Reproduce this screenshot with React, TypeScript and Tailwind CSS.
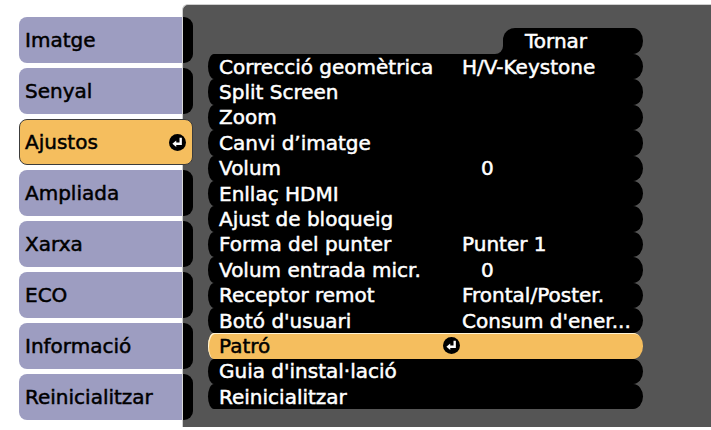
import React from 'react';

const tabs = ['Imatge', 'Senyal', 'Ajustos', 'Ampliada', 'Xarxa', 'ECO', 'Informació', 'Reinicialitzar'];

const rows: { label: string; value?: string; indent?: boolean }[] = [
    { label: 'Correcció geomètrica', value: 'H/V-Keystone' },
    { label: 'Split Screen' },
    { label: 'Zoom' },
    { label: 'Canvi d’imatge' },
    { label: 'Volum', value: '0', indent: true },
    { label: 'Enllaç HDMI' },
    { label: 'Ajust de bloqueig' },
    { label: 'Forma del punter', value: 'Punter 1' },
    { label: 'Volum entrada micr.', value: '0', indent: true },
    { label: 'Receptor remot', value: 'Frontal/Poster.' },
    { label: "Botó d'usuari", value: "Consum d'ener..." },
    { label: 'Patró' },
    { label: "Guia d'instal·lació" },
    { label: 'Reinicialitzar' },
];

function EnterIcon() {
    return (
        <svg width="17" height="17" viewBox="0 0 16 16" className="shrink-0">
            <circle cx="8" cy="8" r="8" fill="#000" />
            <path d="M11 3.5V9.2H6.2" fill="none" stroke="#fff" strokeWidth="2.2" />
            <polygon points="3.2,9.2 6.8,6.2 6.8,12.2" fill="#fff" />
        </svg>
    );
}

export default function App() {
    return (
        <div className="w-[711px] h-[430px] bg-white overflow-hidden flex font-['DejaVu_Sans',sans-serif] text-[20px] [-webkit-text-stroke:0.5px_currentColor]">

            {/* Pestanyes del menú */}
            <div className="relative z-10 ml-[19px] mt-[17px] w-[174px] shrink-0 flex flex-col gap-[5px]">
                {tabs.map((t) =>
                    t === 'Ajustos' ? (
                        <div
                            key={t}
                            className="h-[46px] flex items-center justify-between pl-[5px] pr-[6px] bg-[#f5be5e] rounded-[8px] border border-[#3c3c3c] text-black"
                        >
                            <span>{t}</span>
                            <EnterIcon />
                        </div>
                    ) : (
                        <div key={t} className="h-[46px] flex">
                            <div className="flex-1 flex items-center pl-[6px] bg-[#9d9dc1] rounded-l-[8px] text-black border-r border-[#d8d8d8]">
                                {t}
                            </div>
                            <div className="w-[10px] bg-black rounded-r-[9px]" />
                        </div>
                    )
                )}
            </div>

            {/* Panell */}
            <div className="-ml-[11px] mt-[4px] h-[423px] flex-1 bg-[#555555] rounded-tl-[6px] border-t border-l border-[#cfcfcf] pl-[25px] pt-[23px]">
                <div className="w-[435px] flex flex-col">
                    <div className="h-[26px] flex justify-end">
                        <div className="w-[8px] h-[8px] self-end bg-black">
                            <div className="w-full h-full bg-[#555555] rounded-br-[8px]" />
                        </div>
                        <div className="w-[140px] bg-black text-white rounded-tl-[12px] rounded-r-[10px_13px] flex items-center pl-[22px]">
                            Tornar
                        </div>
                    </div>

                    {rows.map((r) => {
                        const active = r.label === 'Patró';
                        return (
                            <div
                                key={r.label}
                                className={`h-[25.4px] flex items-center pl-[11px] rounded-l-[6px_12.7px] rounded-r-[10px_12.7px] ${
                                    active
                                        ? 'bg-[#f5be5e] text-black shadow-[inset_1px_1px_0_#fff4d6]'
                                        : 'bg-black text-white'
                                }`}
                            >
                                <span className="w-[243px] shrink-0 whitespace-nowrap">{r.label}</span>
                                {active && (
                                    <span className="-ml-[19px]">
                                        <EnterIcon />
                                    </span>
                                )}
                                {r.value && (
                                    <span className={`whitespace-nowrap ${r.indent ? 'pl-[19px]' : ''}`}>{r.value}</span>
                                )}
                            </div>
                        );
                    })}
                </div>
            </div>
        </div>
    );
}
